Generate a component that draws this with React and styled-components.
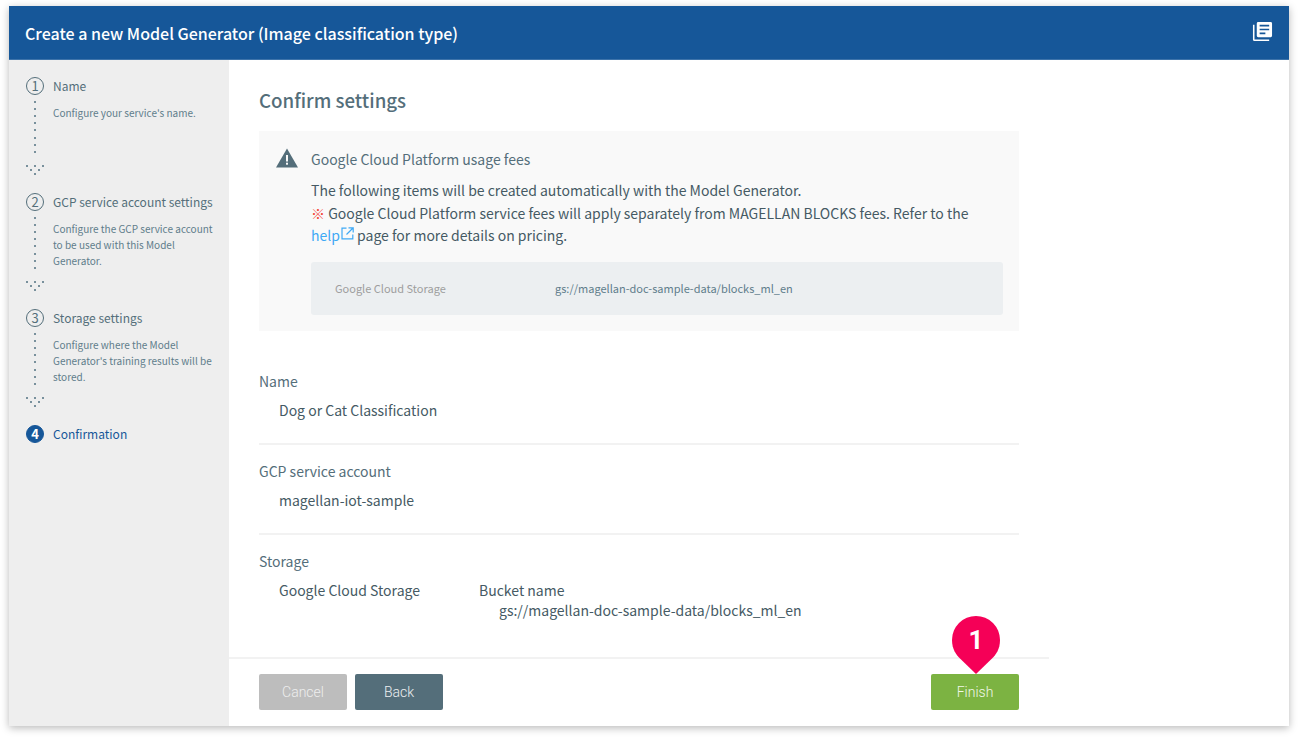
import React from 'react';
import styled, { createGlobalStyle } from 'styled-components';

const steps = [
  { n: 1, title: 'Name', text: ["Configure your service's name."] },
  {
    n: 2,
    title: 'GCP service account settings',
    text: ['Configure the GCP service account', 'to be used with this Model', 'Generator.'],
  },
  {
    n: 3,
    title: 'Storage settings',
    text: ['Configure where the Model', "Generator's training results will be", 'stored.'],
  },
  { n: 4, title: 'Confirmation', active: true },
];

function Connector() {
  const dots = [];
  for (let y = 1; y <= 57; y += 7.1) dots.push(Math.round(y));
  return (
    <ConnectorSvg width="18" height="76" viewBox="0 0 18 76">
      {dots.map(y => (
        <rect key={y} x="8" y={y} width="2" height="2" fill="#78909c" />
      ))}
      <g fill="#78909c">
        <rect x="0" y="65" width="2" height="2" />
        <rect x="4" y="69" width="2" height="2" />
        <rect x="8" y="65" width="2" height="2" />
        <rect x="8" y="73" width="2" height="2" />
        <rect x="12" y="69" width="2" height="2" />
        <rect x="16" y="65" width="2" height="2" />
      </g>
    </ConnectorSvg>
  );
}

export default function App() {
  return (
    <>
      <GlobalStyle />
      <Page>
        <Window>
          <Header>
            <h1>Create a new Model Generator (Image classification type)</h1>
            <HeaderIcon width="21" height="21" viewBox="0 0 22 22" fill="#fff">
              <path d="M1 4h1.6v15.4H18V21H2.6A1.6 1.6 0 0 1 1 19.4z" />
              <path
                fillRule="evenodd"
                d="M6.5 1h13A1.5 1.5 0 0 1 21 2.500v13a1.500 1.500 0 0 1-1.500 1.500h-13A1.500 1.500 0 0 1 5 15.500v-13A1.500 1.500 0 0 1 6.500 1zM8 4v1.800h10V4zm0 4v1.800h10V8zm0 4v1.800h6V12z"
              />
            </HeaderIcon>
          </Header>
          <Body>
            <Sidebar>
              {steps.map(step => (
                <Step key={step.n} $last={step.active}>
                  <Rail>
                    <StepNumber $active={step.active}>{step.n}</StepNumber>
                    {!step.active && <Connector />}
                  </Rail>
                  <div>
                    <StepTitle $active={step.active}>{step.title}</StepTitle>
                    {step.text && (
                      <StepText>
                        {step.text.map(line => (
                          <div key={line}>{line}</div>
                        ))}
                      </StepText>
                    )}
                  </div>
                </Step>
              ))}
            </Sidebar>
            <Main>
              <Content>
                <Heading>Confirm settings</Heading>
                <Notice>
                  <WarningIcon width="22" height="20" viewBox="0 0 22 20">
                    <path d="M11 0.500L22 19.500H0z" fill="#546e7a" />
                    <rect x="10" y="7" width="2" height="6.500" fill="#f9f9f9" />
                    <rect x="10" y="14.700" width="2" height="2" fill="#f9f9f9" />
                  </WarningIcon>
                  <NoticeBody>
                    <NoticeTitle>Google Cloud Platform usage fees</NoticeTitle>
                    <NoticeText>
                      The following items will be created automatically with the Model Generator.
                      <br />
                      <Mark>※</Mark> Google Cloud Platform service fees will apply separately from
                      MAGELLAN BLOCKS fees. Refer to the
                      <br />
                      <HelpLink href="#">
                        help
                        <svg width="13" height="13" viewBox="0 0 13 13" fill="none" stroke="#3fa9f5" strokeWidth="1.200">
                          <path d="M5.500 1.200H1v10.600h10.800V7.500" />
                          <path d="M7.500 0.800h4.700v4.700M12 1L5.500 7.500" />
                        </svg>
                      </HelpLink>{' '}
                      page for more details on pricing.
                    </NoticeText>
                    <StorageBox>
                      <StorageLabel>Google Cloud Storage</StorageLabel>
                      <span>gs://magellan-doc-sample-data/blocks_ml_en</span>
                    </StorageBox>
                  </NoticeBody>
                </Notice>
                <Field>
                  <FieldLabel>Name</FieldLabel>
                  <FieldValue>Dog or Cat Classification</FieldValue>
                </Field>
                <Field>
                  <FieldLabel>GCP service account</FieldLabel>
                  <FieldValue>magellan-iot-sample</FieldValue>
                </Field>
                <Field $plain>
                  <FieldLabel>Storage</FieldLabel>
                  <StorageValue>
                    <span>Google Cloud Storage</span>
                    <div>
                      Bucket name
                      <BucketPath>gs://magellan-doc-sample-data/blocks_ml_en</BucketPath>
                    </div>
                  </StorageValue>
                </Field>
              </Content>
              <Footer>
                <Button $bg="#bdbdbd" $color="#eeeeee">Cancel</Button>
                <Button $bg="#546e7a" $color="#eceff1">Back</Button>
                <FinishWrap>
                  <Pin>
                    <svg width="48" height="58" viewBox="0 0 48 58">
                      <path
                        d="M24 0a24 24 0 0 1 24 24c0 9-4 14.500-8 18.500L24 58 8 42.500C4 38.500 0 33 0 24A24 24 0 0 1 24 0z"
                        fill="#f50057"
                      />
                    </svg>
                    <PinNumber>1</PinNumber>
                  </Pin>
                  <Button $bg="#7cb342" $color="#f1f8e9">Finish</Button>
                </FinishWrap>
              </Footer>
            </Main>
          </Body>
        </Window>
      </Page>
    </>
  );
}

const GlobalStyle = createGlobalStyle`
  html, body {
    margin: 0;
    padding: 0;
    background: #fff;
  }
  body {
    font-family: "Noto Sans CJK JP", "Noto Sans", sans-serif;
    color: #546e7a;
  }
`;

const Page = styled.div`
  width: 1298px;
  height: 738px;
  padding: 6px 9px 12px;
  box-sizing: border-box;
  overflow: hidden;
`;

const Window = styled.div`
  height: 720px;
  display: flex;
  flex-direction: column;
  background: #fff;
  box-shadow: 0 2px 8px rgba(0, 0, 0, 0.28);
`;

const Header = styled.header`
  height: 54px;
  flex: none;
  box-sizing: border-box;
  padding: 0 16px;
  display: flex;
  align-items: center;
  justify-content: space-between;
  background: #165799;
  border-bottom: 1px solid #3d73aa;
  h1 {
    margin: 0;
    font-size: 16px;
    font-weight: 500;
    color: #fff;
  }
`;

const HeaderIcon = styled.svg`
  margin-bottom: 3px;
`;

const Body = styled.div`
  flex: 1;
  display: flex;
  min-height: 0;
`;

const Sidebar = styled.nav`
  width: 220px;
  flex: none;
  box-sizing: border-box;
  padding: 17px 0 0 17px;
  background: #eeeeee;
`;

const Step = styled.div`
  display: flex;
  gap: 9px;
  height: ${props => (props.$last ? 'auto' : '116px')};
`;

const Rail = styled.div`
  width: 18px;
  flex: none;
  display: flex;
  flex-direction: column;
  align-items: center;
`;

const StepNumber = styled.div`
  width: 18px;
  height: 18px;
  flex: none;
  box-sizing: border-box;
  border-radius: 50%;
  border: 1px solid ${props => (props.$active ? '#165799' : '#546e7a')};
  background: ${props => (props.$active ? '#165799' : 'transparent')};
  color: ${props => (props.$active ? '#fff' : '#546e7a')};
  font-size: 13px;
  font-weight: ${props => (props.$active ? 700 : 400)};
  line-height: 15px;
  text-align: center;
`;

const ConnectorSvg = styled.svg`
  flex: none;
  margin-top: 5px;
`;

const StepTitle = styled.div`
  font-size: 12px;
  line-height: 18px;
  color: ${props => (props.$active ? '#165799' : '#546e7a')};
`;

const StepText = styled.div`
  margin-top: 10px;
  font-size: 10px;
  line-height: 16px;
  color: #607d8b;
`;

const Main = styled.main`
  flex: 1;
  min-width: 0;
  display: flex;
  flex-direction: column;
`;

const Content = styled.div`
  width: 820px;
  height: 599px;
  box-sizing: border-box;
  padding: 26px 30px 0;
  border-bottom: 2px solid #f2f2f2;
`;

const Heading = styled.h2`
  margin: 0 0 18px;
  font-size: 18.700px;
  line-height: 27px;
  font-weight: 500;
  color: #546e7a;
`;

const Notice = styled.section`
  display: flex;
  gap: 13px;
  height: 200px;
  margin-bottom: 24px;
  box-sizing: border-box;
  padding: 18px 16px 0 17px;
  background: #f9f9f9;
`;

const WarningIcon = styled.svg`
  flex: none;
  margin-top: -1px;
`;

const NoticeBody = styled.div`
  flex: 1;
  min-width: 0;
`;

const NoticeTitle = styled.div`
  font-size: 14px;
  line-height: 20px;
  color: #546e7a;
`;

const NoticeText = styled.p`
  margin: 10px 0 0;
  font-size: 14px;
  line-height: 22.500px;
  color: #455a64;
`;

const Mark = styled.span`
  color: #f44336;
`;

const HelpLink = styled.a`
  color: #3fa9f5;
  text-decoration: none;
  svg {
    margin-left: 1px;
    vertical-align: 1px;
  }
`;

const StorageBox = styled.div`
  height: 53px;
  margin-top: 15px;
  padding-left: 24px;
  display: flex;
  align-items: center;
  border-radius: 3px;
  background: #eceff1;
  font-size: 11px;
  color: #607d8b;
`;

const StorageLabel = styled.span`
  width: 220px;
  flex: none;
  color: #9e9e9e;
`;

const Field = styled.section`
  height: ${props => (props.$plain ? 'auto' : '90px')};
  box-sizing: border-box;
  padding-top: 16px;
  border-bottom: ${props => (props.$plain ? 'none' : '2px solid #f2f2f2')};
`;

const FieldLabel = styled.div`
  font-size: 14px;
  line-height: 20px;
  color: #546e7a;
`;

const FieldValue = styled.div`
  margin-top: 9px;
  padding-left: 20px;
  font-size: 14px;
  line-height: 20px;
  color: #455a64;
`;

const StorageValue = styled(FieldValue)`
  display: flex;
  span {
    width: 200px;
    flex: none;
  }
`;

const BucketPath = styled.div`
  padding-left: 20px;
`;

const Footer = styled.footer`
  width: 820px;
  box-sizing: border-box;
  padding: 15px 30px 0;
  display: flex;
  gap: 8px;
`;

const Button = styled.button`
  width: 88px;
  height: 36px;
  padding: 0;
  border: none;
  border-radius: 2px;
  background: ${props => props.$bg};
  color: ${props => props.$color};
  font-family: Roboto, sans-serif;
  font-size: 14px;
  font-weight: 300;
`;

const FinishWrap = styled.div`
  position: relative;
  margin-left: auto;
`;

const Pin = styled.div`
  position: absolute;
  left: 21px;
  top: -58px;
  width: 48px;
  height: 58px;
  svg {
    display: block;
  }
`;

const PinNumber = styled.span`
  position: absolute;
  left: 0;
  right: 0;
  top: 8px;
  text-align: center;
  font-family: Roboto, sans-serif;
  font-size: 26px;
  line-height: 32px;
  font-weight: 700;
  color: #fff;
`;
